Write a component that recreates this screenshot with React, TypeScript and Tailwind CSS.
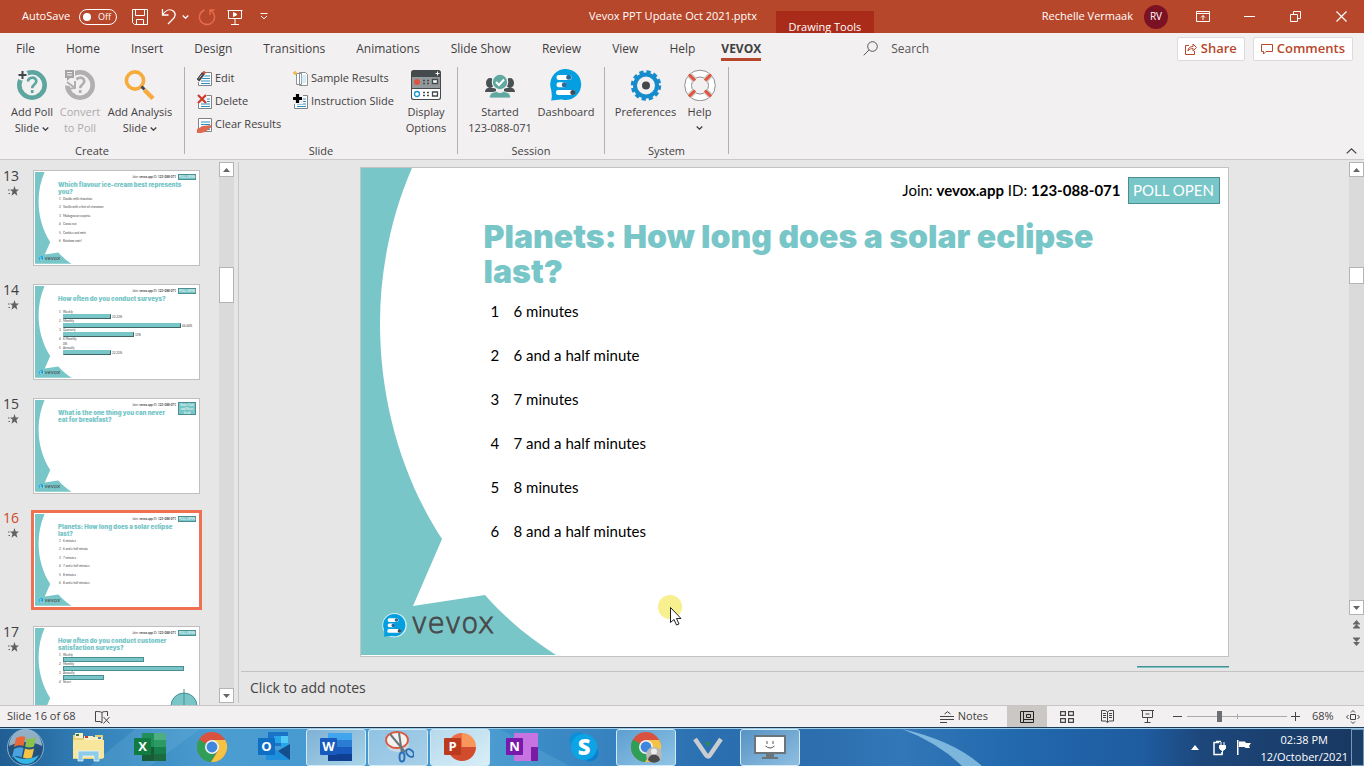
import type { ReactNode } from "react";

type Option = { label: string; bar?: string; value?: string };

type SlideInfo = {
    no: number;
    title: string;
    badge?: string;
    options: Option[];
    kind: "list" | "bars" | "flat" | "empty";
};

const tabs = ["File", "Home", "Insert", "Design", "Transitions", "Animations", "Slide Show", "Review", "View", "Help"];

const answers = ["6 minutes", "6 and a half minute", "7 minutes", "7 and a half minutes", "8 minutes", "8 and a half minutes"];

const slides: SlideInfo[] = [
    {
        no: 13,
        title: "Which flavour ice-cream best represents\nyou?",
        kind: "list",
        options: [
            { label: "Double milk chocolate" },
            { label: "Vanilla with a hint of cinnamon" },
            { label: "Madagascan surprise" },
            { label: "Cocoa nut" },
            { label: "Cookies and mint" },
            { label: "Rainbow swirl" },
        ],
    },
    {
        no: 14,
        title: "How often do you conduct surveys?",
        kind: "bars",
        options: [
            { label: "Weekly", bar: "w-[48px]", value: "22.22%" },
            { label: "Monthly", bar: "w-[118px]", value: "44.44%" },
            { label: "Quarterly", bar: "w-[71px]", value: "33%" },
            { label: "6 Monthly", value: "0%" },
            { label: "Annually", bar: "w-[48px]", value: "22.22%" },
        ],
    },
    { no: 15, title: "What is the one thing you can never\neat for breakfast?", badge: "Enter Text and Press Send", kind: "empty", options: [] },
    { no: 16, title: "Planets: How long does a solar eclipse\nlast?", kind: "list", options: answers.map((label) => ({ label })) },
    {
        no: 17,
        title: "How often do you conduct customer\nsatisfaction surveys?",
        kind: "flat",
        options: [
            { label: "Weekly", bar: "w-[81px]" },
            { label: "Monthly", bar: "w-[121px]" },
            { label: "Annually", bar: "w-[41px]" },
            { label: "Never" },
        ],
    },
];

function Chevron({ className = "" }: { className?: string }) {
    return (
        <svg className={`inline-block h-[4px] w-[7px] ${className}`} viewBox="0 0 7 4" fill="none" stroke="currentColor" strokeWidth="1.3">
            <path d="M.7.6 3.5 3.2 6.3.6" />
        </svg>
    );
}

function Bubble() {
    return (
        <g>
            <path d="M1 31.500C2.500 28 1.600 24.500 1.200 21A15.500 15.500 0 1 1 14 30.900C9.500 30 5.500 31.500 1 31.500Z" fill="#049fe0" />
            <g fill="#fff">
                <rect x="6.500" y="6" width="15" height="5" rx="2.200" />
                <rect x="6.500" y="13.300" width="10" height="5" rx="2.200" />
                <rect x="6" y="21" width="19" height="5" rx="2.200" />
            </g>
            <circle cx="18.700" cy="8.300" r="2.500" fill="#2a6a9c" />
            <circle cx="14.300" cy="15.800" r="2.500" fill="#2a6a9c" />
            <circle cx="22.800" cy="23.500" r="2.500" fill="#424c52" />
        </g>
    );
}

function SlideArt({ logo = true }: { logo?: boolean }) {
    return (
        <svg className="absolute inset-0 size-full" viewBox="0 0 867 488" preserveAspectRatio="none" aria-hidden="true">
            <path d="M0 0H51C30 48 19 103 19 155C19 232 40 308 81 371L52 438L124 427C146 452 170 471 195 487H0Z" fill="#78c6c8" />
            {logo && (
                <g>
                    <g transform="translate(22 446) scale(.72)">
                        <circle cx="16" cy="15.500" r="17" fill="#d3eef5" />
                        <Bubble />
                    </g>
                    <text x="50" y="465" fill="#4a4a4c" stroke="#4a4a4c" strokeWidth="1" fontSize="28" fontWeight="200" fontFamily="'DejaVu Sans', sans-serif">
                        vevox
                    </text>
                </g>
            )}
        </svg>
    );
}

function AddPollIcon({ muted = false }: { muted?: boolean }) {
    const tint = muted ? "#b1afaf" : "#5da69f";
    return (
        <svg className="size-8" viewBox="0 0 32 32" fill="none">
            <circle cx="16" cy="16" r="12.700" stroke={tint} strokeWidth="4.600" />
            <path d="M12 12.500c.3-5 8.300-5 8.300-.2 0 3.400-4.100 3.100-4.100 7M16.200 21v3" stroke={tint} strokeWidth="2.700" />
            {muted ? (
                <g>
                    <path d="M-1-1h12v10l5 5-4 4-13-2Z" fill="#f3f0f1" />
                    <path d="M1 1h9v8H6l-3 3V9H1Z" fill="#a5a3a3" />
                    <path d="M3 3.500h5M3 6h5" stroke="#f3f0f1" />
                    <path d="M3 13l8 6M4 20l7-1V12" stroke="#b1afaf" strokeWidth="2" />
                </g>
            ) : (
                <g>
                    <circle cx="6.500" cy="6" r="5.500" fill="#f3f0f1" />
                    <path d="M6.500 2v8M2.500 6h8" stroke="#3d474b" strokeWidth="2" />
                </g>
            )}
        </svg>
    );
}

function AnalysisIcon() {
    return (
        <svg className="size-8" viewBox="0 0 32 32" fill="none">
            <circle cx="11" cy="11.500" r="8.600" stroke="#f6ab3c" strokeWidth="3.600" />
            <path d="M20.500 21 29 29.500" stroke="#f6ab3c" strokeWidth="4.500" />
            <path d="m17.500 17.500 3 3" stroke="#424a4e" strokeWidth="3" />
        </svg>
    );
}

function DisplayIcon() {
    return (
        <svg className="size-8" viewBox="0 0 32 32">
            <rect x="1" y="1" width="30" height="30" rx="2.500" fill="#454a4c" />
            <rect x="2" y="8" width="28" height="11" fill="#93989a" />
            <path d="M2 20h28v8a2 2 0 0 1-2 2H4a2 2 0 0 1-2-2Z" fill="#fff" />
            <path d="M27.500 2.500v4M25.500 4.500h4" stroke="#fff" />
            <circle cx="7" cy="13" r="3" fill="#dc5340" />
            <circle cx="7" cy="25" r="2.500" fill="none" stroke="#1893d0" strokeWidth="1.300" />
            <path d="M13 11.500h2m2 0h2M13 14.500h2m2 0h2M13 23.500h2m2 0h2M13 26.500h2m2 0h2" stroke="#454a4c" strokeWidth="1.500" />
            <path d="M22.500 10.500h5v4h-5Z" fill="#fff" stroke="#454a4c" strokeWidth="1.300" />
            <path d="M22.500 23h5v4h-5Z" fill="#fff" stroke="#454a4c" strokeWidth="1.300" />
        </svg>
    );
}

function StartedIcon() {
    return (
        <svg className="size-8" viewBox="0 0 32 32">
            <g fill="#4a5154">
                <ellipse cx="6" cy="14" rx="4" ry="5" />
                <ellipse cx="26" cy="14" rx="4" ry="5" />
                <path d="M1 23c0-3 2-4 5-4.500l6 1V23ZM31 23c0-3-2-4-5-4.500l-6 1V23Z" />
            </g>
            <circle cx="16" cy="13" r="8.300" fill="#f3f0f1" />
            <circle cx="16" cy="13" r="7.200" fill="#5fa9a1" />
            <path d="M5.500 29c0-5 2.500-5.500 7-6.500 2 1.500 5 1.500 7 0 4.500 1 7 1.500 7 6.500Z" fill="#5fa9a1" stroke="#f3f0f1" strokeWidth=".8" />
            <path d="m12 13 3 3 5-5.500" fill="none" stroke="#fff" strokeWidth="2" />
        </svg>
    );
}

function GearIcon() {
    return (
        <svg className="size-8" viewBox="0 0 32 32" fill="none">
            <circle cx="16" cy="16.500" r="11" stroke="#168ccc" strokeWidth="4" />
            <circle cx="16" cy="16.500" r="13.500" stroke="#168ccc" strokeWidth="3.400" strokeDasharray="4.200 2.868" />
            <circle cx="16" cy="16.500" r="4" fill="#41494d" />
        </svg>
    );
}

function LifebuoyIcon() {
    return (
        <svg className="size-8" viewBox="0 0 32 32" fill="none">
            <circle cx="16" cy="16.500" r="12" stroke="#fff" strokeWidth="6.500" />
            <circle cx="16" cy="16.500" r="15.300" stroke="#8f9090" />
            <circle cx="16" cy="16.500" r="8.500" stroke="#8f9090" />
            <path d="m5 5.500 6 6M27 5.500l-6 6M5 27.500l6-6M27 27.500l-6-6" stroke="#c9c9c9" strokeWidth="5.500" />
            <path d="m5 5.500 6 6M27 5.500l-6 6M5 27.500l6-6M27 27.500l-6-6" stroke="#e2553b" strokeWidth="3" />
        </svg>
    );
}

function PageIcon({ kind }: { kind: "edit" | "delete" | "clear" | "sample" | "instruction" }) {
    return (
        <svg className="size-4 shrink-0" viewBox="0 0 16 16" fill="none">
            {kind === "sample" ? (
                <g>
                    <path d="M3.500 2.500h5v11h-5zM6.500 1.500h6l2 2v11h-8z" fill="#fff" stroke="#8c9295" />
                    <path d="M8 5h5M8 7h5M8 9h5M8 11h5" stroke="#a9d5e6" strokeWidth=".9" />
                    <path d="M0 2h4M2 0v4" stroke="#f3b545" strokeWidth="1.500" />
                </g>
            ) : (
                <g>
                    <path d="M1.500 1.500h13v13h-13z" fill="#fff" stroke="#7d8386" />
                    <path d="M4 5h9M4 7.500h9M4 10h9M4 12.500h9" stroke="#2f8fc0" strokeWidth="1.200" />
                </g>
            )}
            {kind === "edit" && (
                <g>
                    <path d="M-1-1h9v5L2 11h-3z" fill="#f3f0f1" />
                    <path d="M1 9.500 6.500 2" stroke="#454545" strokeWidth="3.600" />
                    <path d="m6.500 2.500 1.500-2" stroke="#dc5340" strokeWidth="3" />
                    <path d="M2 7.500 5 3.500" stroke="#b5b5b5" />
                </g>
            )}
            {kind === "delete" && (
                <g>
                    <path d="M0 0h10v9H0z" fill="#f3f0f1" />
                    <path d="m1 1 8 8M9 1 1 9" stroke="#d0392b" strokeWidth="2.200" />
                </g>
            )}
            {kind === "clear" && <path d="M0 16v-4l6-3 8-1v2.500L8 15l-4 1Z" fill="#e06a50" />}
            {kind === "instruction" && (
                <g>
                    <path d="M0 0h10v10H0z" fill="#f3f0f1" />
                    <path d="M4.500 0v9M0 4.500h9" stroke="#000" strokeWidth="3.200" />
                </g>
            )}
        </svg>
    );
}

function BigButton({ icon, lines, menu, muted, width }: { icon: ReactNode; lines: string[]; menu?: boolean; muted?: boolean; width: string }) {
    return (
        <button disabled={muted} className={`flex shrink-0 flex-col items-center ${width} ${muted ? "text-[#aeabac]" : ""}`}>
            {icon}
            <span className="mt-[3px] flex flex-col items-center leading-4 whitespace-nowrap">
                {lines.map((line, i) => (
                    <span key={line}>
                        {line}
                        {menu && i === 1 && <Chevron className="ml-[3px] align-middle" />}
                    </span>
                ))}
                {menu && lines.length === 1 && <Chevron className="mt-[6px]" />}
            </span>
        </button>
    );
}

function SmallButton({ kind, label }: { kind: "edit" | "delete" | "clear" | "sample" | "instruction"; label: string }) {
    return (
        <button className="flex h-[23px] items-center gap-[2px] whitespace-nowrap">
            <PageIcon kind={kind} />
            {label}
        </button>
    );
}

function RibbonGroup({ name, className, children }: { name: string; className: string; children: ReactNode }) {
    return (
        <section aria-label={name} className={`flex shrink-0 flex-col justify-between border-r border-[#b3b0b1] ${className}`}>
            <div className="flex justify-center pt-[2px]">{children}</div>
            <div className="text-center leading-[6px]">{name}</div>
        </section>
    );
}

function TitleBar() {
    return (
        <header className="flex h-[33px] shrink-0 items-center bg-[#b7472a] text-[11px] text-white">
            <div className="flex w-[589px] shrink-0 items-center pl-[22px]">
                <span id="autosave">AutoSave</span>
                <button role="switch" aria-checked="false" aria-labelledby="autosave" className="ml-[9px] flex h-4 w-[38px] items-center gap-[7px] rounded-full border border-white pl-[3px] text-[9px]">
                    <span className="size-[8px] rounded-full bg-white" />
                    Off
                </button>
                <button aria-label="Save" className="ml-[15px]">
                    <svg className="size-4" viewBox="0 0 16 16" fill="none" stroke="#fff">
                        <path d="M.5.5h15v15h-13l-2-2zM3.500.5v6h9v-6M4.500 15.500v-5h7v5" />
                    </svg>
                </button>
                <button aria-label="Undo" className="ml-[13px] flex items-center gap-[5px]">
                    <svg className="h-[17px] w-4" viewBox="0 0 16 17" fill="none" stroke="#fff" strokeWidth="1.300">
                        <path d="M1.500 1v6h6M1.500 7C4 3 8 .500 11.500 2.500c4 2.500 3 6.500 0 9L7 16" />
                    </svg>
                    <Chevron />
                </button>
                <button aria-label="Redo" className="ml-[9px]">
                    <svg className="size-[18px]" viewBox="0 0 18 18" fill="none" stroke="#ea6b4b" strokeWidth="1.400">
                        <path d="M6.500 2A7.500 7.500 0 1 0 12 2.200M12 7V2h4.500" />
                    </svg>
                </button>
                <button aria-label="Start slide show" className="ml-[11px]">
                    <svg className="size-4" viewBox="0 0 16 16" fill="none" stroke="#fff">
                        <path d="M.5 1.500h15M1.500 1.500v8h13v-8M8 9.500v6M4 15.500h8" />
                        <path d="M6.500 3.500v4l3.500-2z" fill="#fff" />
                    </svg>
                </button>
                <button aria-label="Customise toolbar" className="ml-[17px]">
                    <svg className="h-[7px] w-[8px]" viewBox="0 0 8 7" fill="none" stroke="#fff">
                        <path d="M.5.500h7M1 3l3 2.800L7 3" />
                    </svg>
                </button>
            </div>
            <span className="whitespace-nowrap">Vevox PPT Update Oct 2021.pptx</span>
            <span className="ml-[19px] flex h-[22px] w-[98px] shrink-0 items-end justify-center self-end bg-[#a92b1a] leading-[13px]">Drawing Tools</span>
            <div className="ml-auto flex items-center">
                <span className="whitespace-nowrap">Rechelle Vermaak</span>
                <span className="ml-[11px] flex size-6 items-center justify-center rounded-full bg-[#7a1224] text-[10px]">RV</span>
                <button aria-label="Ribbon display options" className="ml-[28px]">
                    <svg className="h-[11px] w-[14px]" viewBox="0 0 14 11" fill="none" stroke="#fff">
                        <path d="M.5.500h13v10H.5zM.5 2.500h13M7 9V4.500M5 6.500l2-2 2 2" />
                    </svg>
                </button>
                <button aria-label="Minimise" className="ml-[34px] h-px w-[11px] bg-white" />
                <button aria-label="Restore" className="ml-[35px]">
                    <svg className="size-[11px]" viewBox="0 0 11 11" fill="none" stroke="#fff">
                        <path d="M.5 3.500h7v7h-7zM3.500 3.500v-3h7v7h-3" />
                    </svg>
                </button>
                <button aria-label="Close" className="mr-[17px] ml-[35px]">
                    <svg className="size-[11px]" viewBox="0 0 11 11" fill="none" stroke="#fff" strokeWidth="1.200">
                        <path d="m.5.500 10 10M10.500.5l-10 10" />
                    </svg>
                </button>
            </div>
        </header>
    );
}

function TabRow() {
    return (
        <nav className="flex h-[31px] shrink-0 items-center gap-px pr-[11px] pl-px text-[12px]" role="tablist">
            {tabs.map((tab) => (
                <button key={tab} role="tab" className="shrink-0 px-[15px]">
                    {tab}
                </button>
            ))}
            <button role="tab" aria-selected="true" className="mr-[13px] ml-[10px] h-[25px] border-b-[3px] border-[#b7472a] pt-[3px] font-bold">
                VEVOX
            </button>
            <label className="ml-[88px] flex items-center gap-[13px]">
                <svg className="size-[15px]" viewBox="0 0 15 15" fill="none" stroke="#555">
                    <circle cx="9.500" cy="5.500" r="4.800" />
                    <path d="M6 9 .7 14.300" />
                </svg>
                <input aria-label="Search" placeholder="Search" className="w-[120px] outline-none placeholder:text-[#555]" />
            </label>
            <button className="ml-auto flex h-6 shrink-0 items-center gap-[4px] rounded-[2px] border border-[#dedbdc] bg-white px-[7px] text-[13px] font-semibold text-[#b7472a]">
                <svg className="size-[12px]" viewBox="0 0 12 12" fill="none" stroke="currentColor">
                    <path d="M4 2.500H.5v9h9V8M3 8c0-3 2-4.500 5-4.500V1l3.500 3.500L8 8V5.500C6 5.500 4.500 6 3 8Z" />
                </svg>
                Share
            </button>
            <button className="ml-[7px] flex h-6 shrink-0 items-center gap-[4px] rounded-[2px] border border-[#dedbdc] bg-white px-[7px] text-[13px] font-semibold text-[#b7472a]">
                <svg className="size-[12px]" viewBox="0 0 12 12" fill="none" stroke="currentColor">
                    <path d="M.5 1.500h11v7H5L2.500 11V8.500h-2z" />
                </svg>
                Comments
            </button>
        </nav>
    );
}

function Ribbon() {
    return (
        <div className="flex h-[96px] shrink-0 border-b border-[#cbc9ca] pt-[3px] pb-[5px] text-[11px]">
            <RibbonGroup name="Create" className="w-[185px]">
                <BigButton icon={<AddPollIcon />} lines={["Add Poll", "Slide"]} menu width="w-[48px]" />
                <BigButton icon={<AddPollIcon muted />} lines={["Convert", "to Poll"]} muted width="w-[48px]" />
                <BigButton icon={<AnalysisIcon />} lines={["Add Analysis", "Slide"]} menu width="w-[72px]" />
            </RibbonGroup>
            <RibbonGroup name="Slide" className="w-[273px]">
                <div className="-mt-[2px] ml-[6px] w-[96px]">
                    <SmallButton kind="edit" label="Edit" />
                    <SmallButton kind="delete" label="Delete" />
                    <SmallButton kind="clear" label="Clear Results" />
                </div>
                <div className="-mt-[2px] w-[108px]">
                    <SmallButton kind="sample" label="Sample Results" />
                    <SmallButton kind="instruction" label="Instruction Slide" />
                </div>
                <BigButton icon={<DisplayIcon />} lines={["Display", "Options"]} width="w-[50px]" />
            </RibbonGroup>
            <RibbonGroup name="Session" className="w-[147px]">
                <div className="flex pl-[4px]">
                    <BigButton icon={<StartedIcon />} lines={["Started", "123-088-071"]} width="w-[66px]" />
                    <BigButton icon={<svg className="size-8" viewBox="0 0 32 32"><Bubble /></svg>} lines={["Dashboard"]} width="w-[66px]" />
                </div>
            </RibbonGroup>
            <RibbonGroup name="System" className="w-[124px]">
                <div className="flex pl-[2px]">
                    <BigButton icon={<GearIcon />} lines={["Preferences"]} width="w-[64px]" />
                    <BigButton icon={<LifebuoyIcon />} lines={["Help"]} menu width="w-[44px]" />
                </div>
            </RibbonGroup>
            <button aria-label="Collapse ribbon" className="mr-[7px] ml-auto self-end">
                <svg className="h-[6px] w-[11px]" viewBox="0 0 11 6" fill="none" stroke="#444" strokeWidth="1.300">
                    <path d="m.7 5.400 4.800-4.500 4.800 4.500" />
                </svg>
            </button>
        </div>
    );
}

function Arrow({ down }: { down?: boolean }) {
    return (
        <span className="flex size-[15px] shrink-0 items-center justify-center border border-[#b5b3b3] bg-white">
            <svg className="h-[4px] w-[7px]" viewBox="0 0 7 4">
                <path d={down ? "M0 0h7L3.500 4z" : "M0 4h7L3.500 0z"} fill="#666" />
            </svg>
        </span>
    );
}

function ThumbOption({ slide, option, index }: { slide: SlideInfo; option: Option; index: number }) {
    return (
        <li className="flex items-start gap-[2px] text-[3px] leading-[4px] whitespace-nowrap text-[#444]">
            <span className="w-[2px]">{index + 1}</span>
            <span>
                <span className="block">{option.label}</span>
                {slide.kind !== "list" && (
                    <span className="flex h-[5px] items-center gap-px">
                        {option.bar && (
                            <span className={`h-[5px] border ${slide.kind === "flat" ? "border-[#4a8e91] bg-[#78c6c8]" : "border-t-[#78c6c8] border-r-[#3f6567] border-b-[#3f6567] border-l-[#78c6c8] bg-[#78c6c8]"} ${option.bar}`} />
                        )}
                        {option.value}
                    </span>
                )}
            </span>
        </li>
    );
}

function Thumb({ slide }: { slide: SlideInfo }) {
    const selected = slide.no === 16;
    const spread = { list: "h-[46px] justify-between", bars: "mt-[8px]", flat: "", empty: "" }[slide.kind];
    return (
        <li className="flex h-[96px] shrink-0">
            <div className={`w-[33px] shrink-0 pl-[3px] text-[14px] leading-3 ${selected ? "text-[#d04a26]" : ""}`}>
                {slide.no}
                <svg className="mt-[4px] ml-[5px] h-[10px] w-[11px]" viewBox="0 0 11 10" fill="#5f6163">
                    <path d="m6.500 0 1.200 3.500H11L8.400 5.700l1 4L6.500 7.500l-3 2.200 1-4L2 3.500h3.300zM0 3.500h1.500v1H0zM.5 7H2v1H.5z" />
                </svg>
            </div>
            <div className={`w-[167px] border border-[#c0bfbf] bg-white p-px font-[Lato,sans-serif] ${selected ? "outline-[3px] outline-offset-[-1px] outline-[#f07152] outline-solid" : ""}`}>
                <div className="relative h-full overflow-hidden">
                    <SlideArt logo={slide.kind !== "flat"} />
                    <div className="relative pr-[2px] pl-[22px]">
                        <div className="flex h-[9px] items-start justify-end gap-[2px] pt-[2px] text-[3px] leading-[6px]">
                            <span>
                                Join: <b>vevox.app</b> ID: <b>123-088-071</b>
                            </span>
                            {slide.badge ? (
                                <span className="h-[13px] w-[18px] shrink-0 border border-[#4a8e91] bg-[#78c6c8] text-center leading-[4px] text-white">{slide.badge}</span>
                            ) : (
                                <span className="h-[6px] w-[18px] shrink-0 border border-[#4a8e91] bg-[#78c6c8] text-center leading-[4px] whitespace-nowrap text-white">POLL OPEN</span>
                            )}
                        </div>
                        <p className="w-[136px] pl-px font-[Inter,sans-serif] text-[6px] leading-[7px] font-black whitespace-pre text-[#78c6c8]">{slide.title}</p>
                        <ol className={`mt-[2px] ml-[2px] flex flex-col ${spread}`}>
                            {slide.options.map((option, i) => (
                                <ThumbOption key={option.label} slide={slide} option={option} index={i} />
                            ))}
                        </ol>
                    </div>
                    {slide.kind === "flat" && (
                        <svg className="absolute right-0 bottom-0 h-[32px] w-[28px]" viewBox="0 0 28 32" fill="none">
                            <circle cx="14" cy="18" r="13" fill="#78c6c8" stroke="#4a8e91" />
                            <path d="M14 1v30" stroke="#4a8e91" />
                        </svg>
                    )}
                </div>
            </div>
        </li>
    );
}

function SlideList() {
    return (
        <aside className="flex w-[239px] shrink-0 py-[2px]">
            <ol className="-mb-[2px] flex min-w-0 flex-1 flex-col gap-[18px] overflow-hidden pt-[8px]">
                {slides.map((slide) => (
                    <Thumb key={slide.no} slide={slide} />
                ))}
            </ol>
            <div className="mr-[4px] flex w-[15px] flex-col bg-[#dadada]">
                <Arrow />
                <span className="mt-[90px] mb-auto h-[36px] border border-[#b5b3b3] bg-white" />
                <Arrow down />
            </div>
            <div className="w-px bg-[#c6c6c6]" />
        </aside>
    );
}

function CurrentSlide() {
    return (
        <article className="relative aspect-[869/490] w-[869px] max-w-full shrink-0 border border-[#c3c3c3] bg-white font-[Lato,'Open_Sans',sans-serif] text-[15px] text-black">
            <SlideArt />
            <div className="relative flex h-full flex-col pt-[9px] pr-[8px] pl-[123px]">
                <div className="flex items-center justify-end gap-[7px]">
                    <p>
                        Join: <b>vevox.app</b> ID: <b>123-088-071</b>
                    </p>
                    <span className="flex h-[27px] w-[92px] items-center justify-center border border-[#4a8e91] bg-[#78c6c8] text-white">POLL OPEN</span>
                </div>
                <h1 className="mt-[15px] w-[680px] font-[Inter,sans-serif] text-[32px] leading-[35px] font-black text-[#78c6c8]">
                    Planets: How long does a solar eclipse
                    <br />
                    last?
                </h1>
                <ol className="pl-[7px] leading-[44px]">
                    {answers.map((answer, i) => (
                        <li key={answer} className="flex">
                            <span className="w-[23px]">{i + 1}</span>
                            {answer}
                        </li>
                    ))}
                </ol>
            </div>
            <svg className="absolute top-[426px] left-[296px] h-[36px] w-[28px]" viewBox="0 0 28 36" aria-hidden="true">
                <circle cx="13" cy="13" r="12" fill="#f8ef8e" />
                <path d="M13.500 13.500v15l3.500-3 2.500 5.500 2.500-1-2.500-5.500h4.500z" fill="#fff" stroke="#222" />
            </svg>
        </article>
    );
}

function Canvas() {
    return (
        <main className="flex min-w-0 flex-1 flex-col">
            <div className="flex min-h-0 flex-1 overflow-hidden">
                <div className="flex min-w-0 flex-1 flex-col items-center pt-[7px]">
                    <CurrentSlide />
                    <div className="mt-[9px] flex w-[869px] max-w-full justify-end">
                        <span className="h-[2px] w-[92px] border-t border-[#4a8e91] bg-[#78c6c8]" />
                    </div>
                </div>
                <div className="flex w-[15px] flex-col pt-[2px]">
                    <div className="flex flex-1 flex-col bg-[#dadada]">
                        <Arrow />
                        <span className="mt-[90px] mb-auto h-[17px] border border-[#b5b3b3] bg-white" />
                        <Arrow down />
                    </div>
                    <svg className="h-[56px] w-[15px]" viewBox="0 0 15 56" fill="#666" aria-hidden="true">
                        <path d="m7.500 5 3.500 4H4zM7.500 9l3.500 4H4zM4 23h7l-3.500 4zM4 27h7l-3.500 4z" />
                        <path d="M4 8.500h7v1H4zM4 12.500h7v1H4zM4 22.500h7v1H4z" />
                    </svg>
                </div>
            </div>
            <div className="ml-[2px] flex h-[34px] shrink-0 items-center border-t border-[#c3c3c3] pb-[2px]">
                <textarea aria-label="Notes" rows={1} placeholder="Click to add notes" className="h-5 w-full resize-none pl-[9px] text-[14px] leading-5 outline-none placeholder:text-[#444]" />
            </div>
        </main>
    );
}

function StatusBar() {
    return (
        <footer className="flex h-[23px] shrink-0 items-stretch border-t border-b border-t-[#c6c4c5] border-b-[#1b3a55] pl-[7px] text-[11px]">
            <span className="self-center">Slide 16 of 68</span>
            <button aria-label="Spelling check" className="ml-[19px] self-center">
                <svg className="h-[14px] w-[15px]" viewBox="0 0 15 14" fill="none" stroke="#444">
                    <path d="M7 2.500C5.500 1.500 3 1.500.5 1.500v10H5L7 13zM7 2.500c1-1 3-1 5.500-1V6M8.500 7l6 6.500M14.500 7l-6 6.500" />
                </svg>
            </button>
            <button className="ml-auto flex items-center gap-[4px]">
                <svg className="h-[12px] w-[14px]" viewBox="0 0 14 12" fill="none" stroke="#444">
                    <path d="M0 5.500h14M0 8.500h14M0 11.500h7M4.500 3 7.500.700 10.500 3" />
                </svg>
                Notes
            </button>
            <button aria-label="Normal view" className="ml-[19px] flex w-10 items-center justify-center bg-[#cac7c5]">
                <svg className="h-[12px] w-[14px]" viewBox="0 0 14 12" fill="none" stroke="#222">
                    <path d="M.5.500h13v11H.500zM3.500.5v11M3.500 8.500h10M6.500 3.500h4v3h-4z" />
                </svg>
            </button>
            <button aria-label="Slide sorter" className="flex w-10 items-center justify-center">
                <svg className="h-[12px] w-[14px]" viewBox="0 0 14 12" fill="none" stroke="#444" strokeWidth="1.200">
                    <path d="M.6.600h4.800v3.800H.600zM8.600.600h4.800v3.800H8.600zM.6 7.600h4.800v3.800H.600zM8.600 7.600h4.800v3.800H8.600z" />
                </svg>
            </button>
            <button aria-label="Reading view" className="flex w-10 items-center justify-center">
                <svg className="h-[13px] w-[13px]" viewBox="0 0 13 13" fill="none" stroke="#444">
                    <path d="M6.500 2 4.500.500h-4v10.500h4L6.500 12.500l2-1.500h4V.5h-4zM6.500 2v10M2 3.500h3M2 5.500h3M2 7.500h3M8 3.500h3M8 5.500h3M8 7.500h3" />
                </svg>
            </button>
            <button aria-label="Slide show" className="flex w-10 items-center justify-center">
                <svg className="h-[13px] w-[13px]" viewBox="0 0 13 13" fill="none" stroke="#444">
                    <path d="M0 .5h13M1.500.5v7h10v-7M6.500 7.500v5M3.500 12.500h6M4.500 4h4" />
                </svg>
            </button>
            <button aria-label="Zoom out" className="ml-[6px] w-[9px] self-center">
                <span className="block h-px bg-[#444]" />
            </button>
            <div className="relative ml-[5px] flex items-center">
                <span className="absolute left-[50px] h-[5px] w-px bg-[#aaa]" />
                <input
                    type="range"
                    aria-label="Zoom"
                    defaultValue={32}
                    className="relative h-3 w-[100px] appearance-none bg-transparent [&::-webkit-slider-runnable-track]:h-px [&::-webkit-slider-runnable-track]:bg-[#aaa] [&::-webkit-slider-thumb]:-mt-[5px] [&::-webkit-slider-thumb]:h-[11px] [&::-webkit-slider-thumb]:w-[5px] [&::-webkit-slider-thumb]:appearance-none [&::-webkit-slider-thumb]:bg-[#6b7072]"
                />
            </div>
            <button aria-label="Zoom in" className="ml-[4px] self-center">
                <svg className="size-[9px]" viewBox="0 0 9 9" stroke="#444">
                    <path d="M0 4.500h9M4.500 0v9" />
                </svg>
            </button>
            <span className="ml-[12px] w-[26px] self-center">68%</span>
            <button aria-label="Fit slide to window" className="mr-[4px] ml-[8px] self-center">
                <svg className="size-[14px]" viewBox="0 0 14 14" fill="none" stroke="#444">
                    <path d="M4.500 4.500h5v5h-5zM5 2.500l2-2 2 2M5 11.500l2 2 2-2M2.500 5l-2 2 2 2M11.500 5l2 2-2 2" />
                </svg>
            </button>
        </footer>
    );
}

function Chrome() {
    return (
        <g>
            <circle cx="16" cy="16" r="15" fill="#d9523f" />
            <path d="M16 16 3 8.500A15 15 0 0 0 15 31l7-12Z" fill="#2f9e57" />
            <path d="M16 9h13.300A15 15 0 0 1 15 31l7.500-12Z" fill="#f4c344" />
            <circle cx="16" cy="16" r="7" fill="#f3f3f3" />
            <circle cx="16" cy="16" r="5.400" fill="#3f86dd" />
        </g>
    );
}

function Tile({ letter, colour }: { letter: string; colour: string }) {
    return (
        <g>
            <rect x="0" y="7" width="17" height="17" rx="1" fill={colour} />
            <text x="8.500" y="20" fill="#fff" fontSize="13" fontWeight="700" textAnchor="middle" fontFamily="'Open Sans', sans-serif">
                {letter}
            </text>
        </g>
    );
}

const apps: { name: string; open?: string; icon: ReactNode }[] = [
    {
        name: "Explorer",
        icon: (
            <g>
                <path d="M1 4h8l2 3h12V4h8v24H1z" fill="#e9cf73" />
                <path d="M3 2h8v5H3zM12 5h9v4h-9zM21 6h9v4h-9z" fill="#f8efc4" />
                <path d="M4 3h3v2H4z" fill="#2f7d45" />
                <path d="M13 5h3v2h-3z" fill="#cc3a2c" />
                <path d="M26 6h3v2h-3z" fill="#3b80c4" />
                <path d="M1 9h31v18H1z" fill="#f9e69d" />
                <path d="M6 30V20h21v10h-5v-5H11v5z" fill="#8ccbea" stroke="#e6f6fd" strokeWidth=".8" />
            </g>
        ),
    },
    {
        name: "Excel",
        icon: (
            <g>
                <path d="M8 2h12v14H8z" fill="#1e9058" />
                <path d="M20 2h12v7H20z" fill="#4fae81" />
                <path d="M20 9h12v7H20z" fill="#2c9b63" />
                <path d="M8 16h12v14H8z" fill="#185c37" />
                <path d="M20 16h12v7H20z" fill="#17804a" />
                <path d="M20 23h12v7H20z" fill="#1b6a40" />
                <Tile letter="X" colour="#107c41" />
            </g>
        ),
    },
    { name: "Chrome", icon: <Chrome /> },
    {
        name: "Outlook",
        icon: (
            <g>
                <path d="M10 1h20v14H10z" fill="#1a73c4" />
                <path d="M16 5h7v7h-7zM23 12h7v7h-7z" fill="#28a5e8" />
                <path d="M23 5h7v7h-7z" fill="#50caf4" />
                <path d="M8 14l12 6 12-7v16H8z" fill="#1e8fdc" />
                <path d="m20 20 12-7v16z" fill="#144f8c" />
                <Tile letter="O" colour="#0f6fc5" />
            </g>
        ),
    },
    {
        name: "Word",
        open: "from-[#7fb0d5] to-[#a8d4e8]",
        icon: (
            <g>
                <path d="M8 2h24v7H8z" fill="#41a5ee" />
                <path d="M8 9h24v7H8z" fill="#2b7cd3" />
                <path d="M8 16h24v7H8z" fill="#185abd" />
                <path d="M8 23h24v7H8z" fill="#103f91" />
                <Tile letter="W" colour="#185abd" />
            </g>
        ),
    },
    {
        name: "Snipping Tool",
        open: "from-[#8fc3e3] to-[#a8cfe8]",
        icon: (
            <g fill="none">
                <ellipse cx="16" cy="14" rx="11" ry="7" fill="#c8d9e2" />
                <ellipse cx="15" cy="9" rx="11" ry="8" fill="#f4f2ef" stroke="#d9583f" strokeWidth="1.800" />
                <path d="m8 3 15 18M17 2l3 20" stroke="#6c757c" strokeWidth="2" />
                <ellipse cx="20" cy="26" rx="2.500" ry="4.500" stroke="#2e70b8" strokeWidth="2" />
                <ellipse cx="28" cy="22" rx="4.500" ry="3" stroke="#2e70b8" strokeWidth="2" transform="rotate(45 28 22)" />
            </g>
        ),
    },
    {
        name: "PowerPoint",
        open: "from-[#b5d9ec] to-[#d9eef7]",
        icon: (
            <g>
                <path d="M18 2a14 14 0 0 0-14 14h14z" fill="#ed6c47" />
                <path d="M18 2a14 14 0 0 1 14 14H18z" fill="#f9965a" />
                <path d="M4 16a14 14 0 0 0 28 0z" fill="#d14b2d" />
                <Tile letter="P" colour="#bc3a1d" />
            </g>
        ),
    },
    {
        name: "OneNote",
        icon: (
            <g>
                <path d="M8 2h24v28H8z" fill="#c774e2" />
                <path d="M25 16h7v14h-7z" fill="#7a1ca2" />
                <Tile letter="N" colour="#7719aa" />
            </g>
        ),
    },
    {
        name: "Skype",
        icon: (
            <g>
                <circle cx="10" cy="10" r="8.500" fill="#0a8fd8" />
                <circle cx="22" cy="22" r="8.500" fill="#0b7fd0" />
                <circle cx="16" cy="16" r="13" fill="#0da4e6" />
                <text x="16" y="24" fill="#fff" fontSize="22" fontWeight="800" textAnchor="middle" fontFamily="'Open Sans', sans-serif">
                    S
                </text>
            </g>
        ),
    },
    {
        name: "Chrome profile",
        open: "from-[#5d9fd0] to-[#8fc4e6]",
        icon: (
            <g>
                <Chrome />
                <circle cx="24" cy="24" r="8" fill="#b9b9b9" />
                <circle cx="24" cy="20.500" r="3" fill="#eee" />
                <path d="M18 29c1-7 11-7 12 0a8 8 0 0 1-12 0z" fill="#4b4b4b" />
            </g>
        ),
    },
    {
        name: "V launcher",
        icon: (
            <g fill="none">
                <path d="M3 8 14 24q2 3 4 0L29 8" stroke="#c9ccd0" strokeWidth="4.500" />
                <path d="M13 11h6l-3 5z" fill="#2a8a4d" />
            </g>
        ),
    },
    {
        name: "Remote desktop",
        open: "from-[#5793c4] to-[#8ebfe0]",
        icon: (
            <g fill="none">
                <path d="M1 5h30v17H1z" fill="#fff" stroke="#6b7478" strokeWidth="2" />
                <path d="M12 22h8v4h4v2H8v-2h4z" fill="#6b7478" />
                <path d="M13 10v3M19 10v3M11.500 15q4.500 4 9 0" stroke="#555" />
            </g>
        ),
    },
];

function Taskbar() {
    return (
        <div className="relative flex h-[38px] shrink-0 items-stretch overflow-hidden border-t border-[#9ccbe8] bg-[linear-gradient(90deg,#205d92_0%,#3483bb_7%,#4b9dd1_16%,#4196cf_33%,#3784c1_44%,#2b6fb0_52%,#2c6eae_60%,#3278b8_66%,#2269ae_74%,#1f5b9f_84%,#1d477b_88%,#183760_100%)] text-[11px] text-white">
            <svg className="absolute inset-0 size-full" viewBox="0 0 1364 38" preserveAspectRatio="none" aria-hidden="true">
                <path d="M902 0q52 12 80 38h-20Q938 14 902 0Z" fill="#a9dbf2" opacity=".65" />
                <path d="M135 0 90 38h60L200 0ZM420 0l60 38h90L500 0Z" fill="#7cc3e8" opacity=".2" />
            </svg>
            <button aria-label="Start" className="relative w-[58px] shrink-0 pl-[7px]">
                <svg className="size-[37px]" viewBox="0 0 37 37">
                    <circle cx="18.500" cy="18.500" r="18" fill="#23527d" stroke="#7fb2d6" />
                    <path d="M2 17a16.500 16.500 0 0 1 33 0q-16-8-33 0Z" fill="#b9cfdf" opacity=".75" />
                    <path d="M5 26q13 8 27 0-5 9-13 9T5 26Z" fill="#33b7e8" />
                    <path d="M9 9q5-3 9.500-1l-2 9q-5-2-9.500 1z" fill="#e8683a" />
                    <path d="M20 9q5 2 9-1l-2 9.500q-5 2-9 0z" fill="#8cc14c" />
                    <path d="M7 20q5-3 9.500-1l-2 9.500q-5-3-9.500 0z" fill="#4aa2de" />
                    <path d="M18 19.500q5 2 9 0l-2 9q-5 2-9 0z" fill="#f6c344" />
                </svg>
            </button>
            <div className="relative flex gap-[2px]">
                {apps.map((app) => (
                    <button key={app.name} aria-label={app.name} className={`flex w-[60px] items-center justify-center rounded-[3px] border pb-[2px] ${app.open ? `border-[#d2eaf6] bg-linear-to-br ${app.open}` : "border-transparent"}`}>
                        <svg className="size-8" viewBox="0 0 32 32">
                            {app.icon}
                        </svg>
                    </button>
                ))}
            </div>
            <div className="relative ml-auto flex items-center">
                <svg className="h-[5px] w-[8px]" viewBox="0 0 8 5" fill="#fff">
                    <path d="M0 5h8L4 0z" />
                </svg>
                <svg className="ml-[13px] h-[16px] w-[15px]" viewBox="0 0 15 16" fill="none" stroke="#fff">
                    <path d="M7 2.500H2v12h8V12M4 1.500h5" strokeWidth="1.500" />
                    <path d="M7.500 5.500h6v3q-3 4-6 0zM9 2v3M12 2v3M10.500 10v4" fill="#fff" />
                </svg>
                <svg className="ml-[10px] h-[15px] w-[15px]" viewBox="0 0 15 15" fill="#fff">
                    <path d="M0 0h1.500v15H0zM2 1.500h6l1 1.500h5l-2 3 1 2H8.500L7.500 7H2z" />
                </svg>
                <time className="ml-[8px] block text-center leading-[17px]">
                    02:38 PM
                    <br />
                    12/October/2021
                </time>
                <button aria-label="Show desktop" className="ml-[3px] h-full w-[13px] border border-[#6f9cc0] bg-[#1b3d66]" />
            </div>
        </div>
    );
}

export default function App() {
    return (
        <div className="flex h-screen flex-col overflow-hidden bg-[#f3f0f1] font-['Open_Sans','Noto_Sans',sans-serif] text-[#3f3f3f]">
            <TitleBar />
            <TabRow />
            <Ribbon />
            <div className="flex min-h-0 flex-1 bg-[#e6e6e6]">
                <SlideList />
                <Canvas />
            </div>
            <StatusBar />
            <Taskbar />
        </div>
    );
}
